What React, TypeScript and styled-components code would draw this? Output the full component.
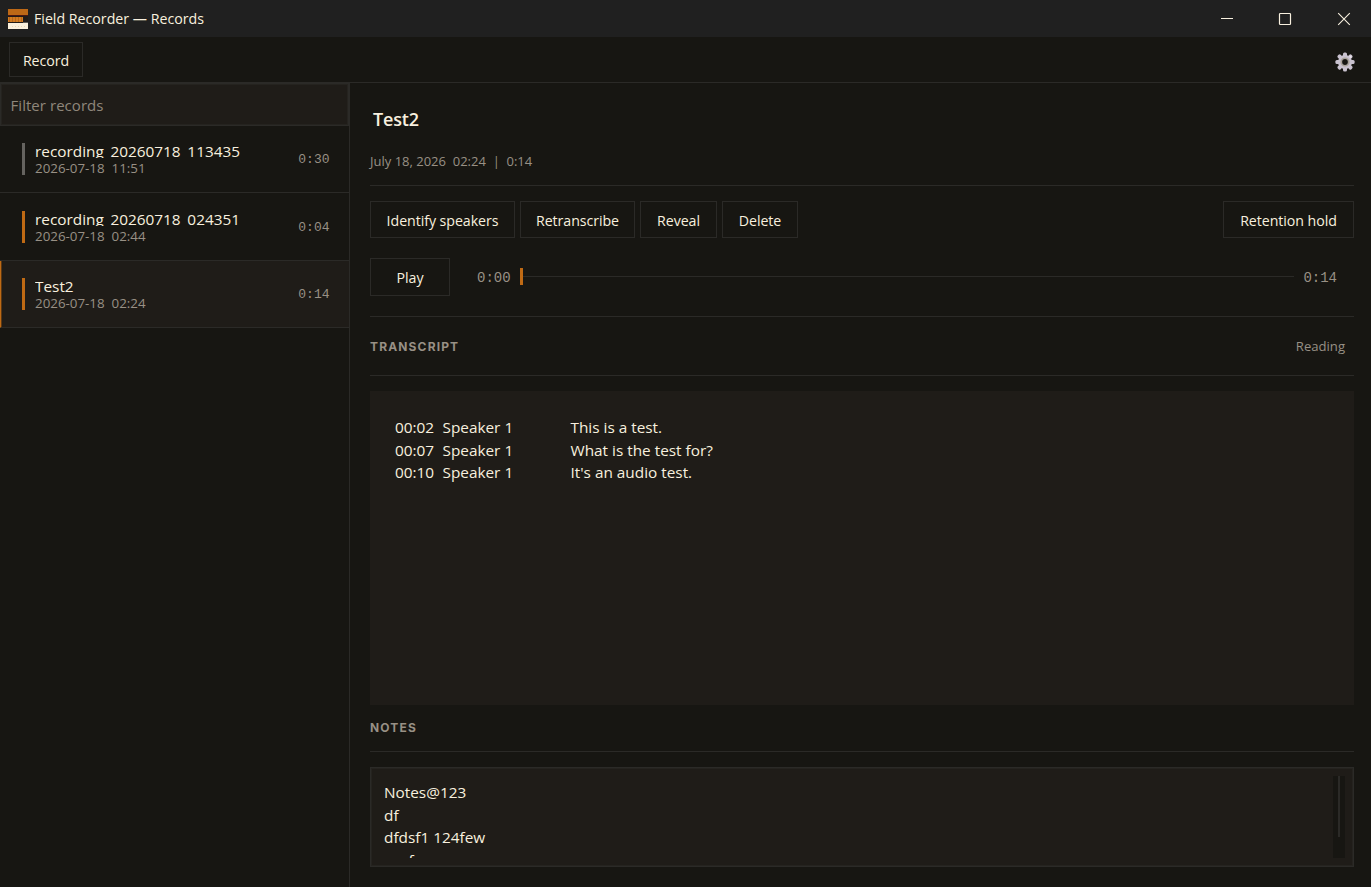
import React from "react";
import styled, { createGlobalStyle } from "styled-components";

const c = {
  bg: "#171612",
  bar: "#202020",
  panel: "#1f1c18",
  line: "#2b2a27",
  soft: "#25231f",
  text: "#f8f0df",
  muted: "#989085",
  accent: "#bf6a14",
};

const Global = createGlobalStyle`
  * { box-sizing: border-box; }
  body { margin: 0; background: ${c.bg}; overflow: hidden; }
`;

const Window = styled.div`
  width: 1371px;
  height: 887px;
  display: flex;
  flex-direction: column;
  background: ${c.bg};
  color: ${c.text};
  font-family: "Open Sans", "Noto Sans", sans-serif;
  font-size: 14px;
  overflow: hidden;
`;

const TitleBar = styled.header`
  height: 37px;
  flex: none;
  display: flex;
  align-items: center;
  padding: 0 20px 0 8px;
  background: ${c.bar};
`;

const AppName = styled.span`
  margin-left: 6px;
  font-size: 14.2px;
  line-height: 20px;
`;

const Controls = styled.div`
  margin-left: auto;
  display: flex;
  gap: 45px;
  svg { display: block; }
`;

const Toolbar = styled.div`
  height: 46px;
  flex: none;
  display: flex;
  align-items: center;
  justify-content: space-between;
  padding: 0 16px 1px 9px;
  border-bottom: 1px solid ${c.line};
  svg { margin-top: 5px; }
`;

const Button = styled.button<{ $w: number; $h?: number }>`
  width: ${(p) => p.$w}px;
  height: ${(p) => p.$h ?? 37}px;
  flex: none;
  padding: 2px 0 0;
  border: 1px solid ${c.line};
  background: transparent;
  color: ${c.text};
  font: 14.2px/20px "Open Sans", "Noto Sans", sans-serif;
  letter-spacing: -0.06px;
  white-space: nowrap;
`;

const RecordButton = styled(Button)`
  padding-top: 3px;
`;

const Body = styled.div`
  flex: 1;
  min-height: 0;
  display: flex;
`;

const Sidebar = styled.aside`
  width: 350px;
  flex: none;
  border-right: 1px solid ${c.line};
`;

const Filter = styled.input`
  display: block;
  width: 349px;
  height: 43px;
  padding: 0 9px 0 9.5px;
  border: 1px solid ${c.line};
  box-shadow: inset 0 0 0 1px ${c.soft};
  background: ${c.panel};
  color: ${c.text};
  font: 15px "Open Sans", "Noto Sans", sans-serif;
  letter-spacing: 0.05px;
  outline: none;
  &::placeholder { color: #8f877b; opacity: 1; }
`;

const Row = styled.div<{ $h: number; $top: number; $selected?: boolean }>`
  height: ${(p) => p.$h}px;
  display: flex;
  align-items: flex-start;
  padding: ${(p) => p.$top}px 19.5px 0 ${(p) => (p.$selected ? 21 : 22)}px;
  border-bottom: 1px solid ${c.line};
  border-left: ${(p) => (p.$selected ? `1px solid ${c.accent}` : "0")};
  box-shadow: ${(p) => (p.$selected ? "inset 1px 0 0 #5a3815" : "none")};
  background: ${(p) => (p.$selected ? c.panel : "transparent")};
`;

const Marker = styled.span<{ $on: boolean }>`
  width: 3px;
  height: 32px;
  margin: 1px 10px 0 0;
  background: ${(p) => (p.$on ? c.accent : "#65635f")};
`;

const RowText = styled.div`
  flex: 1;
`;

const RowTitle = styled.div`
  height: 16px;
  line-height: 18px;
  font-size: 15.35px;
  overflow: hidden;
`;

const RowDate = styled.div`
  height: 18px;
  line-height: 21px;
  font-size: 13.35px;
  color: ${c.muted};
  white-space: pre;
`;

const Mono = styled.span<{ $size: number }>`
  font-family: "Liberation Mono", monospace;
  font-size: ${(p) => p.$size}px;
  line-height: 18px;
  color: ${c.muted};
`;

const RowLength = styled(Mono)`
  margin-top: 9px;
`;

const Main = styled.main`
  flex: 1;
  display: flex;
  flex-direction: column;
  padding: 0 17px 20px 20px;
`;

const Heading = styled.h1`
  height: 60px;
  margin: 0;
  padding: 23px 0 0 3px;
  font-size: 18px;
  line-height: 26px;
  font-weight: 600;
  letter-spacing: -0.15px;
`;

const Meta = styled.div`
  height: 43px;
  padding-top: 9px;
  border-bottom: 1px solid ${c.line};
  font-size: 13px;
  line-height: 18px;
  color: ${c.muted};
  white-space: pre;
`;

const Actions = styled.div`
  display: flex;
  gap: 5px;
  padding-top: 15px;
  & > :last-child { margin-left: auto; }
`;

const Player = styled.div`
  height: 79px;
  display: flex;
  align-items: center;
  padding: 0 17px 1px 0;
  border-bottom: 1px solid ${c.line};
`;

const PlayerTime = styled(Mono)`
  padding-top: 2px;
  button + & { margin-left: 27px; }
`;

const Track = styled.div`
  flex: 1;
  height: 17px;
  margin: 0 9px 0 9px;
  display: flex;
  align-items: center;
`;

const Thumb = styled.span`
  width: 3px;
  height: 17px;
  background: ${c.accent};
`;

const Rail = styled.span`
  flex: 1;
  height: 1px;
  background: ${c.line};
`;

const Section = styled.div<{ $h: number; $pad: number }>`
  height: ${(p) => p.$h}px;
  flex: none;
  display: flex;
  justify-content: space-between;
  padding: ${(p) => p.$pad}px 9px 0 0;
  border-bottom: 1px solid ${c.line};
  margin-bottom: 15px;
`;

const SectionTitle = styled.h2`
  margin: 0;
  font: 700 12px/18px "Inter", "Liberation Sans", sans-serif;
  letter-spacing: 1.15px;
  color: ${c.muted};
`;

const Mode = styled.span`
  font-size: 13.1px;
  line-height: 16px;
  color: ${c.muted};
`;

const Transcript = styled.div`
  height: 314px;
  flex: none;
  padding: 25px;
  background: ${c.panel};
`;

const Line = styled.div`
  display: grid;
  grid-template-columns: 47.5px 128px 1fr;
  font-size: 15.35px;
  line-height: 22.6px;
`;

const Notes = styled.div`
  height: 100px;
  flex: none;
  display: flex;
  padding: 8px 8px 8px 13px;
  border: 1px solid ${c.line};
  box-shadow: inset 0 0 0 1px ${c.soft};
  background: ${c.panel};
`;

const NotesText = styled.div`
  flex: 1;
  height: 82px;
  padding-top: 5px;
  overflow: hidden;
  font-size: 15.35px;
  line-height: 22.6px;
  white-space: pre;
`;

const ScrollTrack = styled.div`
  width: 12px;
  height: 82px;
  padding-left: 5px;
  background: #171612;
`;

const ScrollThumb = styled.div`
  width: 2px;
  height: 61px;
  background: ${c.line};
`;

const Logo = () => (
  <svg width="20" height="20" viewBox="0 0 20 20" shapeRendering="crispEdges">
    <rect width="20" height="6" fill="#bd6816" />
    <rect y="6" width="20" height="1" fill="#4a1712" />
    <rect y="7" width="20" height="7" fill="#211b17" />
    <rect y="8" width="15" height="5" fill="#d27c20" />
    {[1, 4, 7, 10, 13].map((x) => (
      <rect key={x} x={x} y="8" width="1" height="5" fill="#b9651a" />
    ))}
    <rect x="15" y="13" width="5" height="1" fill="#615d58" />
    <rect y="14" width="20" height="6" fill="#fbf0dc" />
    {[4, 7, 10, 13, 16].map((x) => (
      <rect key={x} x={x} y="17" width="1" height="1" fill="#e8d6b5" />
    ))}
  </svg>
);

const Gear = () => (
  <svg width="20" height="20" viewBox="0 0 20 20">
    <g fill="#c9c2cf">
      {[0, 45, 90, 135, 180, 225, 270, 315].map((a) => (
        <rect key={a} x="8" y="0.4" width="4" height="5" rx="1.5" transform={`rotate(${a} 10 10)`} />
      ))}
      <circle cx="10" cy="10" r="7" />
    </g>
    <circle cx="10" cy="10" r="3.8" fill="none" stroke="#a9a299" strokeWidth="1.6" />
    <circle cx="10" cy="10" r="2.9" fill={c.bg} />
    <circle cx="15.5" cy="4.8" r="1.2" fill="#e9e3ea" />
  </svg>
);

const records = [
  { title: "recording_20260718_113435", date: "2026-07-18  11:51", len: "0:30", h: 67, top: 16, on: false },
  { title: "recording_20260718_024351", date: "2026-07-18  02:44", len: "0:04", h: 68, top: 17, on: true },
  { title: "Test2", date: "2026-07-18  02:24", len: "0:14", h: 67, top: 16, on: true, selected: true },
];

const lines = [
  ["00:02", "Speaker 1", "This is a test."],
  ["00:07", "Speaker 1", "What is the test for?"],
  ["00:10", "Speaker 1", "It's an audio test."],
];

export default function App() {
  return (
    <Window>
      <Global />
      <TitleBar>
        <Logo />
        <AppName>Field Recorder — Records</AppName>
        <Controls>
          <svg width="14" height="14" viewBox="0 0 14 14"><path d="M2 6.5h12" stroke={c.text} /></svg>
          <svg width="14" height="14" viewBox="0 0 14 14"><rect x="1.5" y="1.5" width="11" height="11" rx="0.8" fill="none" stroke={c.text} strokeWidth="1.2" /></svg>
          <svg width="14" height="14" viewBox="0 0 14 14"><path d="M1.2 1.2l11.6 11.6M12.8 1.2L1.2 12.8" stroke={c.text} strokeWidth="1.1" /></svg>
        </Controls>
      </TitleBar>
      <Toolbar>
        <RecordButton $w={74} $h={35}>Record</RecordButton>
        <Gear />
      </Toolbar>
      <Body>
        <Sidebar>
          <Filter placeholder="Filter records" />
          {records.map((r) => (
            <Row key={r.title} $h={r.h} $top={r.top} $selected={r.selected}>
              <Marker $on={r.on} />
              <RowText>
                <RowTitle>{r.title}</RowTitle>
                <RowDate>{r.date}</RowDate>
              </RowText>
              <RowLength $size={13}>{r.len}</RowLength>
            </Row>
          ))}
        </Sidebar>
        <Main>
          <Heading>Test2</Heading>
          <Meta>{"July 18, 2026  02:24  |  0:14"}</Meta>
          <Actions>
            <Button $w={145}>Identify speakers</Button>
            <Button $w={115}>Retranscribe</Button>
            <Button $w={77}>Reveal</Button>
            <Button $w={76}>Delete</Button>
            <Button $w={131}>Retention hold</Button>
          </Actions>
          <Player>
            <Button $w={80} $h={38}>Play</Button>
            <PlayerTime $size={14}>0:00</PlayerTime>
            <Track><Thumb /><Rail /></Track>
            <PlayerTime $size={14}>0:14</PlayerTime>
          </Player>
          <Section $h={59} $pad={21}>
            <SectionTitle>TRANSCRIPT</SectionTitle>
            <Mode>Reading</Mode>
          </Section>
          <Transcript>
            {lines.map(([t, who, said]) => (
              <Line key={t}><span>{t}</span><span>{who}</span><span>{said}</span></Line>
            ))}
          </Transcript>
          <Section $h={47} $pad={14}>
            <SectionTitle>NOTES</SectionTitle>
          </Section>
          <Notes>
            <NotesText>{"Notes@123\ndf\ndfdsf1 124few\naesf"}</NotesText>
            <ScrollTrack><ScrollThumb /></ScrollTrack>
          </Notes>
        </Main>
      </Body>
    </Window>
  );
}
